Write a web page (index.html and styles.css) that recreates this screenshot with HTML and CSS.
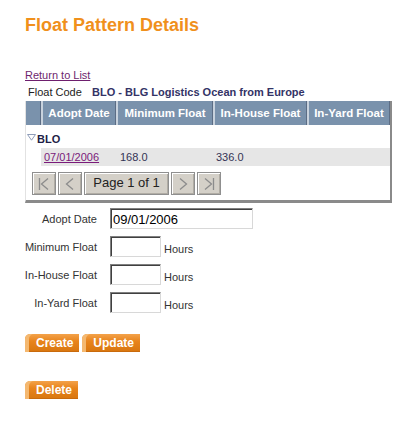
FILE: index.html
```html
<!DOCTYPE html>
<html lang="en">
<head>
  <meta charset="UTF-8" />
  <title>Float Pattern Details</title>
  <link rel="stylesheet" href="styles.css">
</head>
<body>
  <h1 class="title">Float Pattern Details</h1>

  <a class="back" href="#">Return to List</a>
  <div class="code-row">
    <span class="code-label">Float Code</span>
    <span class="code-value">BLO - BLG Logistics Ocean from Europe</span>
  </div>

  <div class="grid">
    <div class="grid-head">
      <div class="hcell c0"></div>
      <div class="hcell c1">Adopt Date</div>
      <div class="hcell c2">Minimum Float</div>
      <div class="hcell c3">In-House Float</div>
      <div class="hcell c4">In-Yard Float</div>
    </div>
    <div class="group-row">
      <svg class="caret" width="9" height="7" viewBox="0 0 9 7"><path d="M0.5 0.5 H8.5 L4.5 6.2 Z" fill="#fff" stroke="#8e9cb8" stroke-width="1"/></svg>
      <span>BLO</span>
    </div>
    <div class="data-row">
      <div class="dcell c1"><a href="#">07/01/2006</a></div>
      <div class="dcell c2">168.0</div>
      <div class="dcell c3">336.0</div>
      <div class="dcell c4"></div>
    </div>
    <div class="pager">
      <span class="pbtn">
        <svg width="14" height="14" viewBox="0 0 14 14"><path d="M2.5 1 V13 M11 1.5 L4.5 7 L11 12.5" fill="none" stroke="#8c8c8c" stroke-width="1.3"/></svg>
      </span>
      <span class="pbtn">
        <svg width="14" height="14" viewBox="0 0 14 14"><path d="M10 1.5 L3.5 7 L10 12.5" fill="none" stroke="#8c8c8c" stroke-width="1.3"/></svg>
      </span>
      <span class="pbtn page">Page 1 of 1</span>
      <span class="pbtn">
        <svg width="14" height="14" viewBox="0 0 14 14"><path d="M4 1.5 L10.5 7 L4 12.5" fill="none" stroke="#8c8c8c" stroke-width="1.3"/></svg>
      </span>
      <span class="pbtn">
        <svg width="14" height="14" viewBox="0 0 14 14"><path d="M3 1.5 L9.5 7 L3 12.5 M11.5 1 V13" fill="none" stroke="#8c8c8c" stroke-width="1.3"/></svg>
      </span>
    </div>
  </div>

  <div class="form">
    <label class="flabel">Adopt Date</label>
    <div class="field"><input class="date" type="text" value="09/01/2006"></div>

    <label class="flabel">Minimum Float</label>
    <div class="field"><input class="small" type="text"><span class="unit">Hours</span></div>

    <label class="flabel">In-House Float</label>
    <div class="field"><input class="small" type="text"><span class="unit">Hours</span></div>

    <label class="flabel">In-Yard Float</label>
    <div class="field"><input class="small" type="text"><span class="unit">Hours</span></div>
  </div>

  <div class="actions">
    <button class="obtn">Create</button>
    <button class="obtn">Update</button>
  </div>
  <div class="actions delete-row">
    <button class="obtn">Delete</button>
  </div>
</body>
</html>
```

FILE: styles.css
```css
body {
  margin: 0;
  padding: 14px 25px 0;
  font-family: "Liberation Sans", Arial, sans-serif;
  font-size: 11px;
  color: #222;
  background: #fff;
}
.title {
  margin: 0;
  font-size: 18px;
  line-height: 22px;
  font-weight: bold;
  color: #f0901c;
}
.back {
  display: inline-block;
  margin-top: 33px;
  line-height: 13px;
  color: #6e1f6e;
}
.code-row {
  margin-top: 4px;
  line-height: 13px;
  display: flex;
}
.code-label {
  width: 64px;
  padding-left: 3px;
}
.code-value {
  font-weight: bold;
  color: #333366;
}

/* grid */
.grid {
  margin-top: 2px;
  width: 364px;
  border-left: 1px solid #e2e2e2;
  border-right: 2px solid #8a8a8a;
  border-bottom: 3px solid #8a8a8a;
  padding-bottom: 5px;
}
.grid-head, .data-row {
  display: flex;
}
.c0 { width: 15px; }
.c1 { width: 75px; }
.c2 { width: 97px; }
.c3 { width: 94px; }
.c4 { width: 83px; }
.hcell {
  box-sizing: border-box;
  height: 24px;
  line-height: 24px;
  background: #7a92ac;
  border-left: 2px solid #c8d2dd;
  border-right: 1px solid #5c6d85;
  color: #fff;
  font-weight: bold;
  font-size: 11.5px;
  text-align: center;
  white-space: nowrap;
}
.hcell.c0 {
  border-left: none;
}
.group-row {
  height: 19px;
  padding-top: 4px;
  line-height: 20px;
  display: flex;
  align-items: center;
  font-weight: bold;
  color: #1e1e46;
}
.caret {
  margin: 0 1px 2px 1px;
}
.data-row {
  margin-left: 15px;
  background: #e6e6e6;
  line-height: 18px;
}
.dcell {
  box-sizing: border-box;
  padding-left: 3px;
  color: #333355;
}
.dcell.c2 {
  padding-left: 4px;
}
.dcell a {
  color: #7a1a7a;
}
.pager {
  margin: 6px 0 0 6px;
  display: flex;
  gap: 2px;
}
.pbtn {
  box-sizing: border-box;
  height: 23px;
  width: 24px;
  display: flex;
  align-items: center;
  justify-content: center;
  background: #d4d0c8;
  border: 1px solid #8f8f8f;
  box-shadow: inset 1px 1px #fff, inset -1px -1px #b0aca4;
}
.pbtn.page {
  width: 85px;
  font-size: 13px;
  color: #222;
  padding-bottom: 2px;
}

/* form */
.form {
  margin: 5px 0 0 -5px;
  display: grid;
  grid-template-columns: 77px auto;
  column-gap: 13px;
  row-gap: 7px;
  align-items: center;
}
.flabel {
  text-align: right;
  white-space: nowrap;
  color: #333;
}
.field {
  display: flex;
  align-items: flex-end;
}
input {
  box-sizing: border-box;
  height: 21px;
  margin: 0;
  padding: 1px 2px 0;
  font-family: "Liberation Sans", Arial, sans-serif;
  font-size: 13px;
  color: #000;
  border: 1px solid;
  border-color: #808080 #d8d8d8 #d8d8d8 #808080;
  box-shadow: inset 1px 1px #404040;
  background: #fff;
}
.date {
  width: 143px;
}
.small {
  width: 51px;
}
.unit {
  margin-left: 3px;
  line-height: 13px;
  margin-bottom: 1px;
  color: #333;
}

/* buttons */
.actions {
  margin-top: 21px;
  display: flex;
  gap: 3px;
}
.delete-row {
  margin-top: 29px;
}
.obtn {
  height: 18px;
  padding: 0 6px 0 11px;
  border: none;
  border-top-left-radius: 5px;
  background: linear-gradient(#f3a24a, #e8841c 40%, #d8760f);
  box-shadow: inset 4px 0 #f4b870, inset 0 -1px #c96a0c;
  color: #fff;
  font-family: "Liberation Sans", Arial, sans-serif;
  font-size: 12px;
  font-weight: bold;
  line-height: 18px;
  cursor: pointer;
}
```
